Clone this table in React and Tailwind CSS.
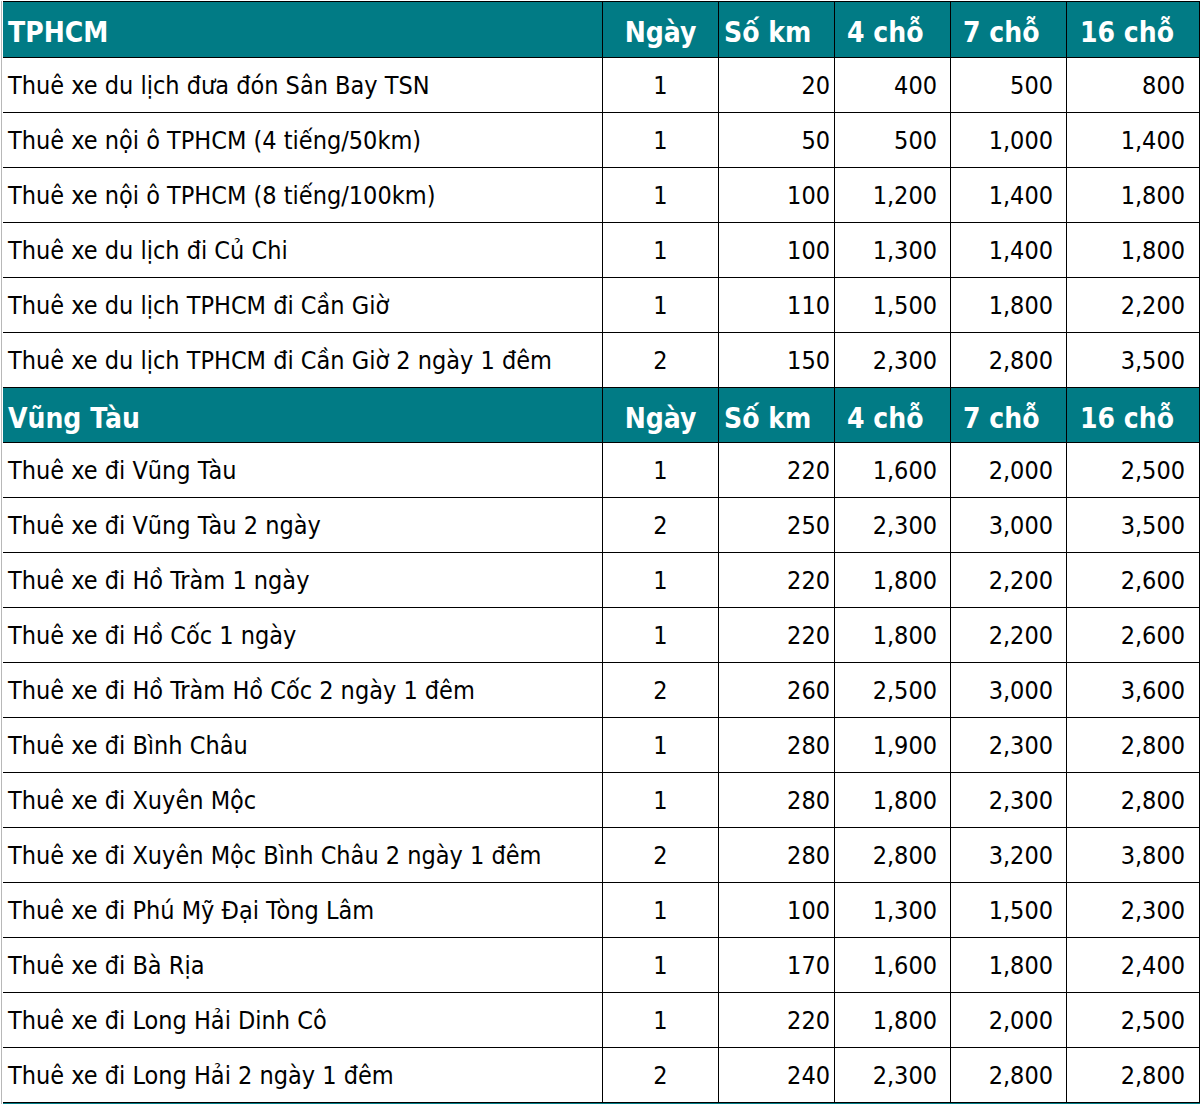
import React from "react";

const sections = [
  {
    title: "TPHCM",
    rows: [
      ["Thuê xe du lịch đưa đón Sân Bay TSN", "1", "20", "400", "500", "800"],
      ["Thuê xe nội ô TPHCM (4 tiếng/50km)", "1", "50", "500", "1,000", "1,400"],
      ["Thuê xe nội ô TPHCM (8 tiếng/100km)", "1", "100", "1,200", "1,400", "1,800"],
      ["Thuê xe du lịch đi Củ Chi", "1", "100", "1,300", "1,400", "1,800"],
      ["Thuê xe du lịch TPHCM đi Cần Giờ", "1", "110", "1,500", "1,800", "2,200"],
      ["Thuê xe du lịch TPHCM đi Cần Giờ 2 ngày 1 đêm", "2", "150", "2,300", "2,800", "3,500"],
    ],
  },
  {
    title: "Vũng Tàu",
    rows: [
      ["Thuê xe đi Vũng Tàu", "1", "220", "1,600", "2,000", "2,500"],
      ["Thuê xe đi Vũng Tàu 2 ngày", "2", "250", "2,300", "3,000", "3,500"],
      ["Thuê xe đi Hồ Tràm 1 ngày", "1", "220", "1,800", "2,200", "2,600"],
      ["Thuê xe đi Hồ Cốc 1 ngày", "1", "220", "1,800", "2,200", "2,600"],
      ["Thuê xe đi Hồ Tràm Hồ Cốc 2 ngày 1 đêm", "2", "260", "2,500", "3,000", "3,600"],
      ["Thuê xe đi Bình Châu", "1", "280", "1,900", "2,300", "2,800"],
      ["Thuê xe đi Xuyên Mộc", "1", "280", "1,800", "2,300", "2,800"],
      ["Thuê xe đi Xuyên Mộc Bình Châu 2 ngày 1 đêm", "2", "280", "2,800", "3,200", "3,800"],
      ["Thuê xe đi Phú Mỹ Đại Tòng Lâm", "1", "100", "1,300", "1,500", "2,300"],
      ["Thuê xe đi Bà Rịa", "1", "170", "1,600", "1,800", "2,400"],
      ["Thuê xe đi Long Hải Dinh Cô", "1", "220", "1,800", "2,000", "2,500"],
      ["Thuê xe đi Long Hải 2 ngày 1 đêm", "2", "240", "2,300", "2,800", "2,800"],
    ],
  },
];

const grid = "grid grid-cols-[600px_116px_116px_116px_116px_133px]";
const cell = "flex items-center border-r border-b border-black whitespace-nowrap";

function HeaderRow({ title, first }) {
  return (
    <div className={`${grid} ${first ? "h-[56px]" : "h-[55px]"} bg-[#017b85] text-white font-bold text-[28px] leading-none`}>
      <div className={`${cell} pl-[5px] pt-[7px]`}>{title}</div>
      <div className={`${cell} justify-center pt-[7px]`}>Ngày</div>
      <div className={`${cell} pl-[5px] pt-[7px]`}>Số km</div>
      <div className={`${cell} pl-[12px] pt-[7px]`}>4 chỗ</div>
      <div className={`${cell} pl-[12px] pt-[7px]`}>7 chỗ</div>
      <div className={`${cell} pl-[13px] pt-[7px]`}>16 chỗ</div>
    </div>
  );
}

function BodyRow({ r }) {
  return (
    <div className={`${grid} h-[55px] bg-white text-black text-[25px] leading-none`}>
      <div className={`${cell} pl-[5px]`}>{r[0]}</div>
      <div className={`${cell} justify-center`}>{r[1]}</div>
      <div className={`${cell} justify-end pr-[4px]`}>{r[2]}</div>
      <div className={`${cell} justify-end pr-[13px]`}>{r[3]}</div>
      <div className={`${cell} justify-end pr-[13px]`}>{r[4]}</div>
      <div className={`${cell} justify-end pr-[14px]`}>{r[5]}</div>
    </div>
  );
}

export default function App() {
  return (
    <div
      className="w-[1202px] h-[1104px] overflow-hidden bg-white"
      style={{ fontFamily: '"DejaVu Sans Condensed", "DejaVu Sans", sans-serif' }}
    >
      <div className="ml-[1px] mt-[1px] border-l border-[#b8b8b8] h-[1103px] pl-[1px]">
        <div className="border-t border-black w-[1197px]">
          {sections.map((s, si) => (
            <React.Fragment key={si}>
              <HeaderRow title={s.title} first={si === 0} />
              {s.rows.map((r, i) => (
                <BodyRow key={i} r={r} />
              ))}
            </React.Fragment>
          ))}
          <div className="h-[20px] bg-[#017b85]" />
        </div>
      </div>
    </div>
  );
}
